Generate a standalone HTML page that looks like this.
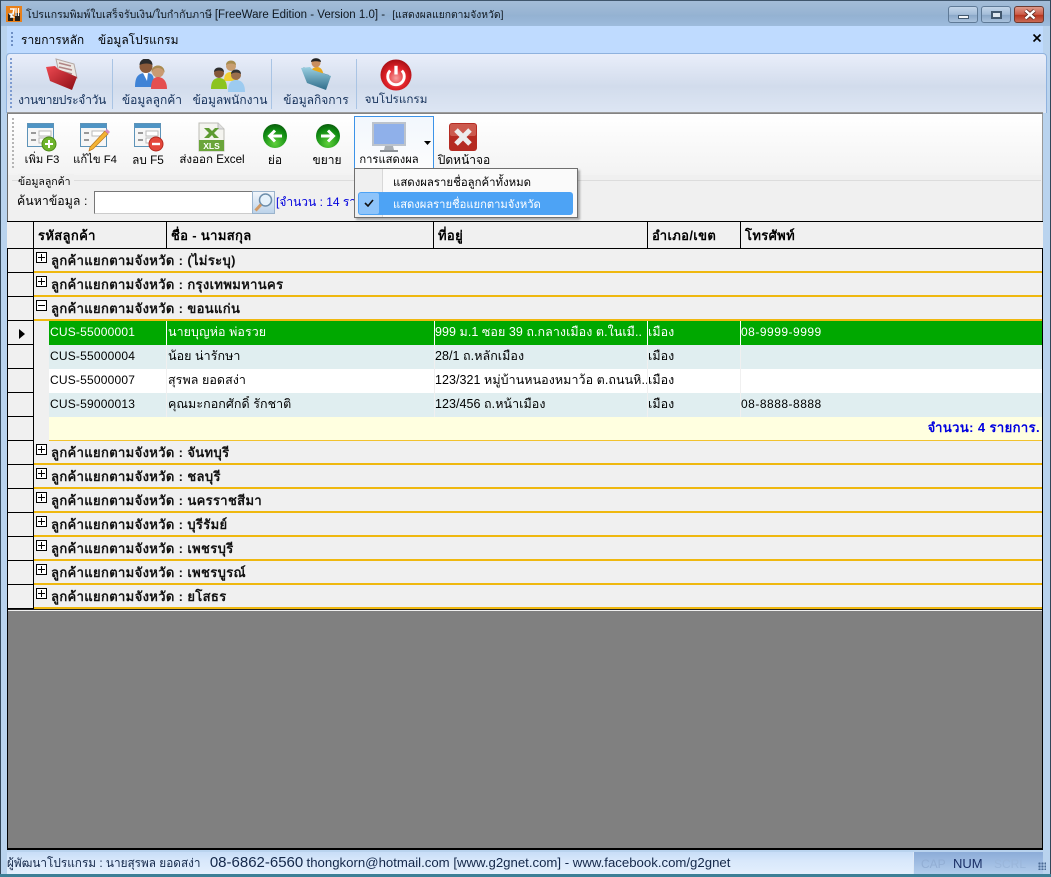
<!DOCTYPE html>
<html><head><meta charset="utf-8">
<style>
html,body{margin:0;padding:0}
body{width:1051px;height:877px;position:relative;overflow:hidden;background:#b9d3ee;font-family:"Liberation Sans",sans-serif;font-size:12px;color:#000}
div,span,svg{position:absolute;box-sizing:border-box}
.t{white-space:nowrap;line-height:16px}
.lbl{white-space:nowrap;line-height:16px;text-align:center;color:#15315a}
.lb2{white-space:nowrap;line-height:16px;text-align:center;color:#000}
.g{left:8px;width:1034px;height:24px;background:#f0f0f0;border-bottom:2px solid #efb80f}
.rh{left:8px;width:26px;height:24px;background:#f0f0f0;border-right:1px solid #000;border-bottom:1px solid #000}
.gt{left:51px;top:3px;margin-top:1px;font-weight:bold;font-size:13px;letter-spacing:.36px;color:#111;white-space:nowrap;line-height:16px}
.box{left:36px;top:3px;width:11px;height:11px;border:1px solid #000;background:#fff}
.box:before{content:"";position:absolute;left:1px;top:4px;width:7px;height:1px;background:#000}
.plus:after{content:"";position:absolute;left:4px;top:1px;width:1px;height:7px;background:#000}
.row{left:49px;width:993px;height:24px}
.c{top:3px;white-space:nowrap;line-height:16px;overflow:hidden;font-size:12.5px;letter-spacing:.05px}
.n{letter-spacing:.5px;font-size:12px}
.cu{letter-spacing:.2px;font-size:12px}
.v{top:0;width:1px;height:24px;background:#f0f0f0}
.hd{top:221px;height:29px;border-right:1px solid #000;font-weight:bold;line-height:30px;padding-left:4px;white-space:nowrap;font-size:13px;letter-spacing:.35px}
.sep{width:1px;background:#a9c4e4}
</style></head><body>

<!-- title bar -->
<div style="left:0;top:0;width:1051px;height:26px;background:linear-gradient(#a4bdd8,#94b2d2 60%,#9dbbdc);border-top:1px solid #40566c"></div>
<div style="left:0;top:0;width:1px;height:877px;background:#33475a"></div>
<div style="left:1050px;top:0;width:1px;height:877px;background:#33475a"></div>
<svg style="left:6px;top:6px" width="16" height="16" viewBox="0 0 16 16"><rect width="16" height="16" fill="#e8801a"/><rect x="2" y="7" width="5" height="8" fill="#2a2016"/><rect x="9" y="7" width="5" height="8" fill="#2a2016"/><path d="M4 3h4l-1 5H4l3 3H4" fill="none" stroke="#fff" stroke-width="1.6"/><path d="M10 2v8M12.5 2v8" stroke="#fff" stroke-width="1.2"/></svg>
<div class="t" style="left:26px;top:7px;font-size:10.500px;color:#101820">โปรแกรมพิมพ์ใบเสร็จรับเงิน/ใบกำกับภาษี <span style="position:static;font-size:11.500px">[FreeWare Edition - Version 1.0] - </span><span style="position:static;font-size:10.300px;margin-left:4px">[แสดงผลแยกตามจังหวัด]</span></div>

<!-- window buttons -->
<div style="left:948px;top:6px;width:30px;height:17px;border:1px solid #5f7a97;border-radius:3px;background:linear-gradient(#c3d5e9,#a3bcd8 50%,#8ba8c8 55%,#a9c2dd)"></div>
<div style="left:958px;top:15px;width:11px;height:4px;background:#f2f5f8;border:1px solid #42586e"></div>
<div style="left:981px;top:6px;width:30px;height:17px;border:1px solid #5f7a97;border-radius:3px;background:linear-gradient(#c3d5e9,#a3bcd8 50%,#8ba8c8 55%,#a9c2dd)"></div>
<div style="left:991px;top:11px;width:11px;height:8px;background:#dfe7ef;border:2px solid #42586e"></div>
<div style="left:1014px;top:6px;width:30px;height:17px;border:1px solid #6d3a30;border-radius:3px;background:linear-gradient(#dd9a8c,#cc5c48 50%,#b8351f 55%,#c96a55)"></div>
<svg style="left:1023px;top:9px" width="14" height="11" viewBox="0 0 14 11"><path d="M2.500 1.500l9 8M11.500 1.500l-9 8" stroke="#5a2a22" stroke-width="4"/><path d="M2.500 1.500l9 8M11.500 1.500l-9 8" stroke="#fff" stroke-width="2.400"/></svg>

<!-- menu bar -->
<div style="left:7px;top:26px;width:1036px;height:27px;background:#bfdbff"></div>
<div style="left:11px;top:32px;width:2px;height:16px;background:repeating-linear-gradient(#6f8fc4 0 2px,transparent 2px 4px)"></div>
<div class="t" style="left:21px;top:32px;font-size:12px">รายการหลัก</div>
<div class="t" style="left:98px;top:32px;font-size:12px">ข้อมูลโปรแกรม</div>
<svg style="left:1032px;top:33px" width="10" height="10" viewBox="0 0 10 10"><path d="M1.500 1.500l7 7M8.500 1.500l-7 7" stroke="#000" stroke-width="1.600"/></svg>

<!-- toolbar 1 -->
<div style="left:6px;top:53px;width:1041px;height:60px;border:1px solid #8fb2de;border-bottom:0;border-radius:4px 4px 0 0;background:linear-gradient(#e9eefa,#d2dcec 55%,#dde6f4)"></div>
<div style="left:10px;top:58px;width:2px;height:50px;background:repeating-linear-gradient(#7d9bd0 0 2px,transparent 2px 4px)"></div>
<div class="sep" style="left:112px;top:59px;height:50px"></div>
<div class="sep" style="left:271px;top:59px;height:50px"></div>
<div class="sep" style="left:356px;top:59px;height:50px"></div>

<!-- red folder -->
<svg style="left:44px;top:58px" width="36" height="34" viewBox="0 0 36 34"><defs><linearGradient id="rf" x1="0" y1="0" x2="1" y2="1"><stop offset="0" stop-color="#ee4a52"/><stop offset="1" stop-color="#8c0d14"/></linearGradient><linearGradient id="bf" x1="0" y1="0" x2="0" y2="1"><stop offset="0" stop-color="#9bd0e2"/><stop offset="1" stop-color="#2f6d8a"/></linearGradient></defs><path d="M12 1l18 5 3 14-18-5z" fill="#ece8e4" stroke="#b3a7a3"/><path d="M15 5l12 3M15 9l13 3M16 13l12 3" stroke="#b08585" stroke-width="1.500"/><path d="M2 9l9-1 3 3 19 8-5 13-22-9z" fill="url(#rf)"/></svg>
<!-- customers -->
<svg style="left:133px;top:59px" width="36" height="33" viewBox="0 0 36 33"><circle cx="13" cy="7.500" r="6.500" fill="#8a5a3a"/><path d="M6.500 6a6.500 6.500 0 0 1 13 0c-3-2-9-2-13 0z" fill="#2c2c2c"/><path d="M2 28c0-10 3-14 11-14s8 4 8 14z" fill="#3f83d6"/><path d="M10 14l5 0-1 8z" fill="#fff"/><circle cx="25" cy="12.500" r="6" fill="#c99a72"/><path d="M18.500 14c-1-10 14-10 13 0-1-4-4-5-6.500-5s-5.500 1-6.500 5z" fill="#a98b50"/><path d="M18 30c0-9 3-12 7-12s9 3 9 12z" fill="#e44f50"/></svg>
<!-- staff -->
<svg style="left:211px;top:59px" width="36" height="33" viewBox="0 0 36 33"><circle cx="20" cy="7" r="5" fill="#c89e70"/><path d="M15 6c0-6 10-6 10 0-3-2-7-2-10 0z" fill="#a68c4f"/><path d="M13 22c0-7 3-9 7-9s7 2 7 9z" fill="#f0cf33"/><circle cx="8" cy="14" r="5" fill="#85583a"/><path d="M3 13c0-6 10-6 10 0-3-2-7-2-10 0z" fill="#2e2e2e"/><path d="M0 30c0-8 3-11 8-11s8 3 8 11z" fill="#8cc41f"/><circle cx="25" cy="16" r="5" fill="#9b6f4c"/><path d="M20 15c0-6 10-6 10 0-3-2-7-2-10 0z" fill="#333"/><path d="M17 33c0-9 3-12 8-12s9 3 9 12z" fill="#9dcbf0"/></svg>
<!-- business folder -->
<svg style="left:300px;top:57px" width="34" height="35" viewBox="0 0 34 35"><path d="M3 10l26 8-2 10z" fill="#3f7a96"/><path d="M9 19c1-6 4-9 8-9s6 3 7 10l-2 3z" fill="#e8a81c"/><circle cx="16" cy="6" r="4.500" fill="#c98e5e"/><path d="M11 5c0-5 10-5 10 0-3-1-7-1-10 0z" fill="#222"/><path d="M1 11l9-1 3 3 18 6-5 14-19-7z" fill="url(#bf)"/></svg>
<!-- power -->
<svg style="left:380px;top:59px" width="32" height="32" viewBox="0 0 33 33"><defs><radialGradient id="pw" cx=".5" cy=".6" r=".6"><stop offset="0" stop-color="#f6a0a0"/><stop offset=".55" stop-color="#e2232a"/><stop offset="1" stop-color="#a50d12"/></radialGradient></defs><circle cx="16.500" cy="16.500" r="16" fill="url(#pw)"/><path d="M10.500 12a8.500 8.500 0 1 0 12 0" fill="none" stroke="#fff" stroke-width="3"/><path d="M16.500 7v9" stroke="#fff" stroke-width="3.400"/></svg>

<div class="lbl" style="left:12px;top:92px;width:100px;letter-spacing:-.35px">งานขายประจำวัน</div>
<div class="lbl" style="left:116px;top:92px;width:72px">ข้อมูลลูกค้า</div>
<div class="lbl" style="left:187px;top:92px;width:86px">ข้อมูลพนักงาน</div>
<div class="lbl" style="left:276px;top:92px;width:80px">ข้อมูลกิจการ</div>
<div class="lbl" style="left:358px;top:92px;width:76px;font-size:11.700px">จบโปรแกรม</div>

<!-- child window frame -->
<div style="left:7px;top:112px;width:1036px;height:740px;background:#f0f0f0;border-left:1px solid #666;border-right:1px solid #999"></div>
<div style="left:7px;top:112px;width:1036px;height:2px;background:linear-gradient(#a8a8a8,#777)"></div>
<div style="left:8px;top:114px;width:1034px;height:61px;background:linear-gradient(#fff,#f3f3f3)"></div>
<div style="left:12px;top:118px;width:2px;height:50px;background:repeating-linear-gradient(#b5b5b5 0 2px,transparent 2px 4px)"></div>

<!-- toolbar 2 icons -->
<svg style="left:27px;top:123px" width="30" height="29" viewBox="0 0 30 29"><rect x=".5" y=".5" width="26" height="23" fill="#f6f6f6" stroke="#5d93b8"/><rect x="1" y="1" width="25" height="4" fill="#4f94c4"/><rect x="12" y="8" width="12" height="5" fill="#fff" stroke="#bbb"/><rect x="12" y="15" width="12" height="5" fill="#fff" stroke="#bbb"/><path d="M4 10h5M4 17h5" stroke="#999" stroke-width="2"/><circle cx="22" cy="21" r="7" fill="#6fb52c" stroke="#4d8a18"/><path d="M22 17v8M18 21h8" stroke="#fff" stroke-width="2"/></svg>
<svg style="left:80px;top:123px" width="30" height="30" viewBox="0 0 30 30"><rect x=".5" y=".5" width="26" height="23" fill="#f6f6f6" stroke="#5d93b8"/><rect x="1" y="1" width="25" height="4" fill="#4f94c4"/><rect x="12" y="8" width="12" height="5" fill="#fff" stroke="#bbb"/><path d="M4 10h5M4 17h5" stroke="#999" stroke-width="2"/><path d="M10 24L25 8l3 3-15 15-4 2z" fill="#f3b334" stroke="#b9751a" stroke-width=".7"/><path d="M25 8l2-2 3 3-2 2z" fill="#d58ac2"/></svg>
<svg style="left:134px;top:123px" width="30" height="29" viewBox="0 0 30 29"><rect x=".5" y=".5" width="26" height="23" fill="#f6f6f6" stroke="#5d93b8"/><rect x="1" y="1" width="25" height="4" fill="#4f94c4"/><rect x="12" y="8" width="12" height="5" fill="#fff" stroke="#bbb"/><rect x="12" y="15" width="12" height="5" fill="#fff" stroke="#bbb"/><path d="M4 10h5M4 17h5" stroke="#999" stroke-width="2"/><circle cx="22" cy="21" r="7" fill="#e4483c" stroke="#b52a20"/><path d="M18 21h8" stroke="#fff" stroke-width="2.400"/></svg>
<svg style="left:198px;top:122px" width="28" height="30" viewBox="0 0 28 30"><path d="M1 1h19l6 6v22H1z" fill="#f4f4ef" stroke="#bdbdb5"/><path d="M20 1v6h6" fill="#ddd" stroke="#bbb"/><path d="M6 6h5l3 3 3-3h4l-5 5 5 5h-5l-2-3-3 3H6l5-5z" fill="#5e9b32"/><rect x="1" y="18" width="25" height="11" fill="#6aa53a"/><text x="13.500" y="27" font-size="8.500" font-weight="bold" fill="#fff" text-anchor="middle" font-family="Liberation Sans">XLS</text></svg>
<svg style="left:263px;top:124px" width="24" height="24" viewBox="0 0 24 24"><defs><radialGradient id="gb" cx=".5" cy=".8" r=".8"><stop offset="0" stop-color="#5fd13a"/><stop offset=".7" stop-color="#0f8a12"/><stop offset="1" stop-color="#0a5c0c"/></radialGradient></defs><circle cx="12" cy="12" r="12" fill="url(#gb)"/><path d="M19 12H7M12 6.500L6.500 12l5.500 5.500" fill="none" stroke="#fff" stroke-width="3"/></svg>
<svg style="left:316px;top:124px" width="24" height="24" viewBox="0 0 24 24"><circle cx="12" cy="12" r="12" fill="url(#gb)"/><path d="M5 12h12M12 6.500l5.500 5.500-5.500 5.500" fill="none" stroke="#fff" stroke-width="3"/></svg>

<div style="left:354px;top:116px;width:80px;height:56px;background:linear-gradient(#f2f7fd,#fdfdfd);border:1px solid #3c93e8"></div>
<svg style="left:371px;top:121px" width="36" height="32" viewBox="0 0 36 32"><rect x="1" y="1" width="34" height="24" fill="#bcc3cc"/><rect x="3" y="3" width="30" height="20" fill="#8fb0ea"/><path d="M14 25h8l1 4h-10z" fill="#a8aeb5"/><rect x="9" y="29" width="18" height="2" fill="#8d9298"/></svg>
<svg style="left:424px;top:141px" width="7" height="4" viewBox="0 0 7 4"><path d="M0 0h7L3.500 4z" fill="#000"/></svg>
<svg style="left:449px;top:123px" width="28" height="28" viewBox="0 0 28 28"><rect width="28" height="28" rx="3" fill="#b52b22"/><rect x="1" y="1" width="26" height="12" rx="2" fill="#cc5a4e"/><path d="M7 7l14 14M21 7L7 21" stroke="#ececec" stroke-width="5"/></svg>

<div class="lb2" style="left:18px;top:152px;width:48px;font-size:11.200px">เพิ่ม F3</div>
<div class="lb2" style="left:68px;top:152px;width:54px;font-size:11.300px">แก้ไข F4</div>
<div class="lb2" style="left:126px;top:152px;width:44px;font-size:11.800px">ลบ F5</div>
<div class="lb2" style="left:172px;top:152px;width:80px;font-size:11.600px">ส่งออก Excel</div>
<div class="lb2" style="left:260px;top:152px;width:30px">ย่อ</div>
<div class="lb2" style="left:308px;top:152px;width:38px">ขยาย</div>
<div class="lb2" style="left:355px;top:152px;width:68px;font-size:11.200px">การแสดงผล</div>
<div class="lb2" style="left:435px;top:152px;width:58px">ปิดหน้าจอ</div>

<!-- group box -->
<div style="left:12px;top:180px;width:1029px;height:1px;background:#dcdcdc"></div>
<div class="t" style="left:18px;top:174px;font-size:10.500px;background:#f0f0f0;padding:0 3px 0 0">ข้อมูลลูกค้า</div>
<div class="t" style="left:17px;top:193px;font-size:12.300px;letter-spacing:.05px">ค้นหาข้อมูล :</div>
<div style="left:94px;top:191px;width:159px;height:23px;background:#fff;border:1px solid #777;border-right:0;border-bottom-color:#ccc"></div>
<div style="left:252px;top:191px;width:23px;height:23px;background:linear-gradient(#f2f6fb,#bcd3ea);border:1px solid #9ab3cc"></div>
<svg style="left:253px;top:192px" width="21" height="21" viewBox="0 0 21 21"><circle cx="12.500" cy="8" r="6" fill="#e6f2fb" stroke="#6d8eab" stroke-width="1.500"/><path d="M8 12.500L2.500 18.500" stroke="#d19a66" stroke-width="3"/></svg>
<div class="t" style="left:276px;top:194px;color:#0000dd">[จำนวน : 14 รายการ]</div>

<!-- grid background -->
<div style="left:8px;top:610px;width:1034px;height:238px;background:#808080"></div>
<div style="left:7px;top:848px;width:1036px;height:2px;background:#000"></div>
<div style="left:7px;top:221px;width:1036px;height:390px;background:#f0f0f0"></div>
<div style="left:7px;top:221px;width:1px;height:628px;background:#000"></div>
<div style="left:1042px;top:221px;width:1px;height:628px;background:#000"></div>

<!-- header -->
<div style="left:7px;top:221px;width:1036px;height:29px;background:#f0f0f0;border-top:1px solid #000;border-bottom:2px solid #000"></div>
<div class="hd" style="left:8px;width:26px"></div>
<div class="hd" style="left:34px;width:133px">รหัสลูกค้า</div>
<div class="hd" style="left:167px;width:267px">ชื่อ - นามสกุล</div>
<div class="hd" style="left:434px;width:214px">ที่อยู่</div>
<div class="hd" style="left:648px;width:93px">อำเภอ/เขต</div>
<div class="hd" style="left:741px;width:301px;border-right:0">โทรศัพท์</div>

<!-- group rows -->
<div class="g" style="top:249px"></div><div class="rh" style="top:249px"></div><div class="box plus" style="top:252px"></div><div class="gt" style="top:252px">ลูกค้าแยกตามจังหวัด : (ไม่ระบุ)</div>
<div class="g" style="top:273px"></div><div class="rh" style="top:273px"></div><div class="box plus" style="top:276px"></div><div class="gt" style="top:276px">ลูกค้าแยกตามจังหวัด : กรุงเทพมหานคร</div>
<div class="g" style="top:297px"></div><div class="rh" style="top:297px"></div><div class="box" style="top:300px"></div><div class="gt" style="top:300px">ลูกค้าแยกตามจังหวัด : ขอนแก่น</div>

<!-- data rows -->
<div class="rh" style="top:321px"></div>
<svg style="left:19px;top:329px" width="6" height="10" viewBox="0 0 6 10"><path d="M0 0l6 5-6 5z" fill="#000"/></svg>
<div class="rh" style="top:345px"></div><div class="rh" style="top:369px"></div><div class="rh" style="top:393px"></div><div class="rh" style="top:417px"></div>

<div class="row" style="top:321px;background:#00a800;color:#fff">
<div class="v" style="left:117px;background:#fff"></div><div class="v" style="left:385px;background:#fff"></div><div class="v" style="left:598px;background:#fff"></div><div class="v" style="left:691px;background:#fff"></div>
<div class="c cu" style="left:1px">CUS-55000001</div><div class="c" style="left:119px">นายบุญห่อ พ่อรวย</div><div class="c" style="left:386px;width:212px">999 ม.1 ซอย 39 ถ.กลางเมือง ต.ในเมื..</div><div class="c" style="left:599px">เมือง</div><div class="c n" style="left:692px">08-9999-9999</div></div>
<div class="row" style="top:345px;background:#e0eef0">
<div class="v" style="left:117px"></div><div class="v" style="left:385px"></div><div class="v" style="left:598px"></div><div class="v" style="left:691px"></div>
<div class="c cu" style="left:1px">CUS-55000004</div><div class="c" style="left:119px">น้อย น่ารักษา</div><div class="c" style="left:386px">28/1 ถ.หลักเมือง</div><div class="c" style="left:599px">เมือง</div></div>
<div class="row" style="top:369px;background:#fff">
<div class="v" style="left:117px"></div><div class="v" style="left:385px"></div><div class="v" style="left:598px"></div><div class="v" style="left:691px"></div>
<div class="c cu" style="left:1px">CUS-55000007</div><div class="c" style="left:119px">สุรพล ยอดสง่า</div><div class="c" style="left:386px;width:212px">123/321 หมู่บ้านหนองหมาว้อ ต.ถนนหิ..</div><div class="c" style="left:599px">เมือง</div></div>
<div class="row" style="top:393px;background:#e0eef0">
<div class="v" style="left:117px"></div><div class="v" style="left:385px"></div><div class="v" style="left:598px"></div><div class="v" style="left:691px"></div>
<div class="c cu" style="left:1px">CUS-59000013</div><div class="c" style="left:119px">คุณมะกอกศักดิ์ รักชาติ</div><div class="c" style="left:386px">123/456 ถ.หน้าเมือง</div><div class="c" style="left:599px">เมือง</div><div class="c n" style="left:692px">08-8888-8888</div></div>
<div class="row" style="top:417px;height:24px;background:#ffffe0;border-bottom:1px solid #f2c22e">
<div class="c" style="right:2px;top:3px;color:#0000e0;font-weight:bold;font-size:13px;letter-spacing:.4px">จำนวน: 4 รายการ.</div></div>

<!-- groups below -->
<div class="g" style="top:441px"></div><div class="rh" style="top:441px"></div><div class="box plus" style="top:444px"></div><div class="gt" style="top:444px">ลูกค้าแยกตามจังหวัด : จันทบุรี</div>
<div class="g" style="top:465px"></div><div class="rh" style="top:465px"></div><div class="box plus" style="top:468px"></div><div class="gt" style="top:468px">ลูกค้าแยกตามจังหวัด : ชลบุรี</div>
<div class="g" style="top:489px"></div><div class="rh" style="top:489px"></div><div class="box plus" style="top:492px"></div><div class="gt" style="top:492px">ลูกค้าแยกตามจังหวัด : นครราชสีมา</div>
<div class="g" style="top:513px"></div><div class="rh" style="top:513px"></div><div class="box plus" style="top:516px"></div><div class="gt" style="top:516px">ลูกค้าแยกตามจังหวัด : บุรีรัมย์</div>
<div class="g" style="top:537px"></div><div class="rh" style="top:537px"></div><div class="box plus" style="top:540px"></div><div class="gt" style="top:540px">ลูกค้าแยกตามจังหวัด : เพชรบุรี</div>
<div class="g" style="top:561px"></div><div class="rh" style="top:561px"></div><div class="box plus" style="top:564px"></div><div class="gt" style="top:564px">ลูกค้าแยกตามจังหวัด : เพชรบูรณ์</div>
<div class="g" style="top:585px"></div><div class="rh" style="top:585px"></div><div class="box plus" style="top:588px"></div><div class="gt" style="top:588px">ลูกค้าแยกตามจังหวัด : ยโสธร</div>
<div style="left:8px;top:609px;width:1034px;height:1px;background:#222"></div>

<!-- dropdown menu -->
<div style="left:354px;top:168px;width:224px;height:50px;background:#fafafa;border:1px solid #6f6f6f;box-shadow:2px 2px 2px rgba(0,0,0,.3)"></div>
<div style="left:355px;top:169px;width:28px;height:48px;background:#f0f0f0;border-right:1px solid #d8d8d8"></div>
<div style="left:358px;top:192px;width:215px;height:23px;background:#4da3f5;border-radius:3px"></div>
<div style="left:359px;top:193px;width:20px;height:21px;background:#8ec4fa;border-radius:2px"></div>
<svg style="left:364px;top:199px" width="10" height="8" viewBox="0 0 10 8"><path d="M1 4l3 3 5-6" fill="none" stroke="#111" stroke-width="1.600"/></svg>
<div class="t" style="left:393px;top:175px;font-size:11.400px">แสดงผลรายชื่อลูกค้าทั้งหมด</div>
<div class="t" style="left:393px;top:197px;color:#fff;font-size:11.200px">แสดงผลรายชื่อแยกตามจังหวัด</div>

<!-- status bar -->
<div style="left:1px;top:850px;width:1049px;height:27px;background:#b9d3ee"></div>
<div style="left:7px;top:852px;width:906px;height:22px;background:linear-gradient(#c8ddf7,#d8e8fb 40%,#e4effc)"></div>
<div style="left:913px;top:852px;width:130px;height:22px;background:linear-gradient(#8cacd8,#b3cdec);border-left:1px solid #dce8f6"></div>
<div class="t" style="left:7px;top:855px;font-size:11.800px;color:#14284a">ผู้พัฒนาโปรแกรม : นายสุรพล ยอดสง่า <span style="position:static;font-size:15px;margin-left:6px">08-6862-6560</span> <span style="position:static;font-size:13.200px">thongkorn@hotmail.com [www.g2gnet.com] - www.facebook.com/g2gnet</span></div>
<div class="t" style="left:921px;top:856px;font-size:12px;color:#92aed4">CAP</div>
<div class="t" style="left:953px;top:856px;font-size:13px;color:#1a2f66">NUM</div>
<div class="t" style="left:994px;top:856px;font-size:12px;color:#9ab6da">SCRL</div>
<div style="left:1038px;top:862px;width:8px;height:8px;background:radial-gradient(circle,#4a6a94 1px,transparent 1.300px) 0 0/3px 3px"></div>
<div style="left:0;top:874px;width:1051px;height:3px;background:#3d7f96"></div>

</body></html>
